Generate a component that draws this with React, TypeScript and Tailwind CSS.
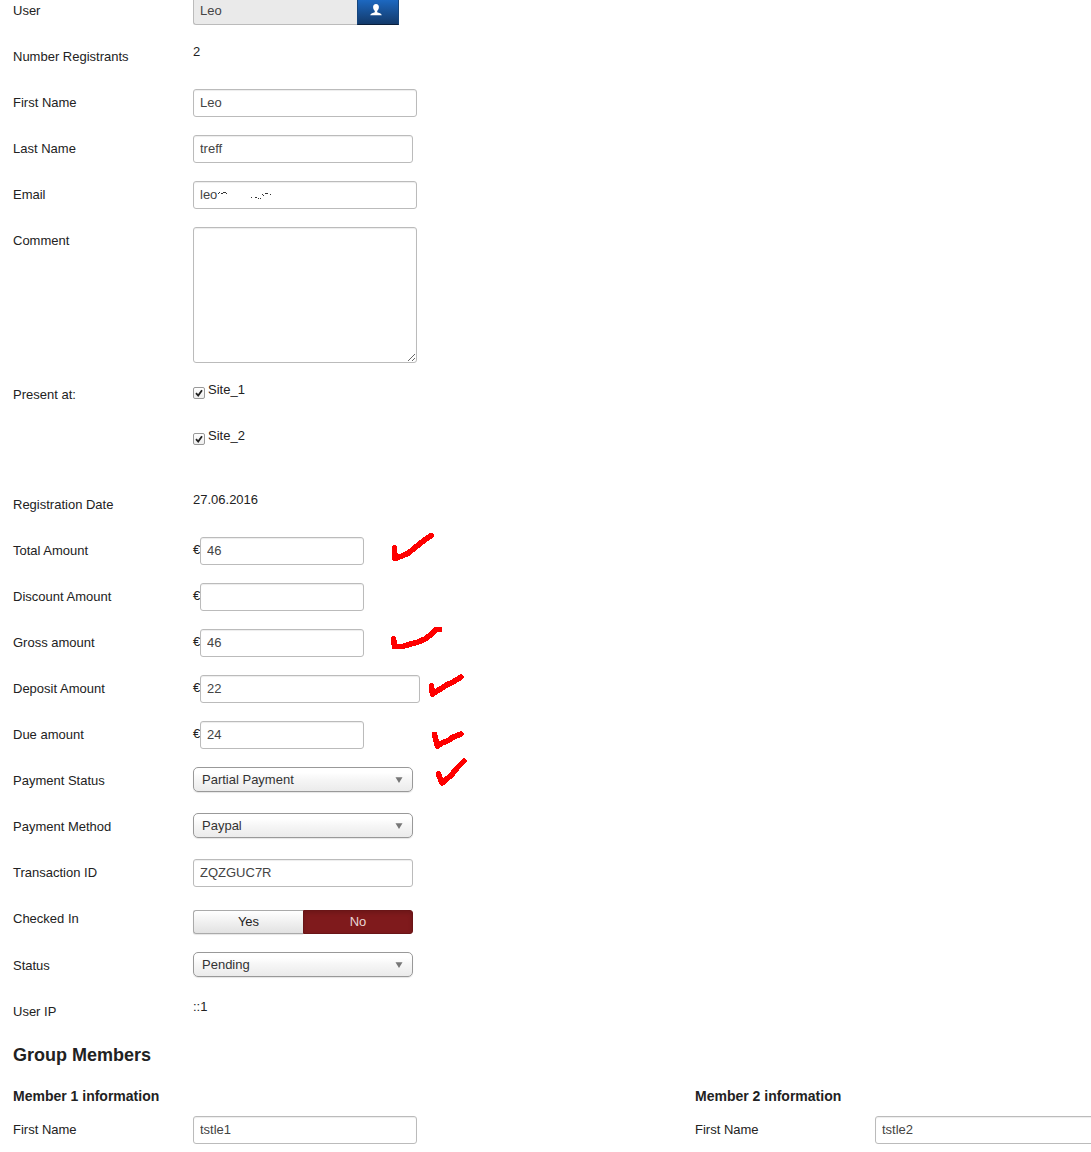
import React, { useState } from 'react';

const field = 'h-7 rounded-[3px] border border-[#bbb] bg-white px-1.5 pb-0.5 text-[13px] leading-[18px] text-[#444] shadow-[inset_0_1px_1px_rgba(0,0,0,0.075)] outline-none';

type RowProps = {
  label: string;
  htmlFor?: string;
  children: React.ReactNode;
};

function Row({ label, htmlFor, children }: RowProps) {
  return (
    <div className="flex min-h-7 items-start">
      {htmlFor ? (
        <label htmlFor={htmlFor} className="w-[180px] shrink-0 pt-[5px]">{label}</label>
      ) : (
        <span className="w-[180px] shrink-0 pt-[5px]">{label}</span>
      )}
      {children}
    </div>
  );
}

function Amount({ id, label, value, width = 'w-[164px]' }: { id: string; label: string; value: string; width?: string }) {
  return (
    <Row label={label} htmlFor={id}>
      <span className="w-[7px] pt-1">€</span>
      <input id={id} type="text" defaultValue={value} className={`${field} ${width}`} />
    </Row>
  );
}

function Dropdown({ id, label, options }: { id: string; label: string; options: string[] }) {
  return (
    <Row label={label} htmlFor={id}>
      <div className="relative w-[220px]">
        <select
          id={id}
          className="block h-[25px] w-full appearance-none rounded-[5px] border border-[#999] bg-linear-to-b from-white from-20% via-[#f6f6f6] via-50% to-[#ebebeb] pr-6 pl-2 text-[13px] text-[#333] shadow-[0_1px_1px_rgba(0,0,0,0.1)] outline-none"
        >
          {options.map((o) => (
            <option key={o}>{o}</option>
          ))}
        </select>
        <svg viewBox="0 0 8 6" className="pointer-events-none absolute top-[10px] right-[10px] h-[6px] w-[8px]" fill="#777">
          <path d="M0.5 0.3h7L4 6z" />
        </svg>
      </div>
    </Row>
  );
}

function Site({ id, label }: { id: string; label: string }) {
  return (
    <div className="flex min-h-7 items-start">
      <span className="relative mt-1.5 mr-[3px] block h-3 w-3">
        <input
          id={id}
          type="checkbox"
          defaultChecked
          className="peer block h-3 w-3 appearance-none rounded-[2px] border border-[#999] bg-linear-to-b from-white to-[#eee]"
        />
        <svg viewBox="0 0 12 12" className="pointer-events-none absolute inset-0 hidden peer-checked:block" fill="none" stroke="#222" strokeWidth="1.8">
          <path d="M3 6.2l2.2 2.4L9 3.2" />
        </svg>
      </span>
      <label htmlFor={id}>{label}</label>
    </div>
  );
}

function Member({ number }: { number: number }) {
  const id = `member-${number}`;
  return (
    <section className="w-[682px] shrink-0">
      <h4 className="mb-2.5 text-sm leading-5 font-bold">Member {number} information</h4>
      <Row label="First Name" htmlFor={id}>
        <input id={id} type="text" defaultValue={`tstle${number}`} className={`${field} w-[224px]`} />
      </Row>
    </section>
  );
}

// Red pen ticks next to the amounts
function Marks() {
  return (
    <svg
      viewBox="0 0 90 270"
      className="pointer-events-none absolute top-[525px] left-[385px] h-[270px] w-[90px]"
      fill="none"
      stroke="#fe0000"
      strokeWidth="5.6"
      strokeLinecap="round"
      strokeLinejoin="round"
      shapeRendering="crispEdges"
    >
      <path d="M9.5 23L10 33.5L17 31L23.5 28L32 21L41 14L46 10.5" />
      <path d="M8.5 114L9.5 121.5H17.5L24 119.5L32 117.5L40 114L45.5 110L50.5 104.5L54.5 104.5" />
      <path d="M46.5 161L47.5 169L61.5 160L68 157L76 152" />
      <path d="M49.5 209.5L52.5 221L58 217.5L63.5 215.5L67 212.5L76 209" />
      <path d="M53.5 249L57 258L66.5 250L72 243L79 236" />
    </svg>
  );
}

export default function App() {
  const [checkedIn, setCheckedIn] = useState('No');

  return (
    <div className="relative overflow-hidden bg-white pb-2 pl-[13px] font-['Liberation_Sans',Arial,sans-serif] text-[13px] leading-[18px] text-[#222]">
      <form className="-mt-[3px] flex flex-col gap-[18px]">
        <Row label="User" htmlFor="user">
          <input id="user" type="text" readOnly defaultValue="Leo" className="h-7 w-[164px] rounded-l-[3px] border border-r-0 border-[#bbb] bg-[#eaeaea] px-1.5 pb-0.5 text-[13px] text-[#444] outline-none" />
          <button type="button" aria-label="Select user" className="flex h-7 w-[42px] justify-center border border-t-[#1a62b5] border-r-[#16457c] border-b-[#0b1f3a] border-l-[#16457c] bg-linear-to-b from-[#1d6cc8] to-[#133a6b] pt-1.5 pr-1">
            <svg viewBox="0 0 12 12" className="h-3 w-3" fill="#fff">
              <path d="M6 0C4 0 3 1.4 3.1 3.3C3.2 5 4 6.2 4.8 6.9V8.2C3.2 8.8 0.6 9.2 0.2 11.2H11.8C11.4 9.2 8.8 8.8 7.2 8.2V6.9C8 6.2 8.8 5 8.9 3.3C9 1.4 8 0 6 0z" />
            </svg>
          </button>
        </Row>
        <Row label="Number Registrants">
          <span>2</span>
        </Row>
        <Row label="First Name" htmlFor="first-name">
          <input id="first-name" type="text" defaultValue="Leo" className={`${field} w-[224px]`} />
        </Row>
        <Row label="Last Name" htmlFor="last-name">
          <input id="last-name" type="text" defaultValue="treff" className={`${field} w-[220px]`} />
        </Row>
        <Row label="Email" htmlFor="email">
          <div className="relative">
            <input id="email" type="text" defaultValue="leo" className={`${field} block w-[224px]`} />
            {/* what is left of the erased address */}
            <svg viewBox="0 0 56 10" className="pointer-events-none absolute top-[9px] left-6 h-2.5 w-14" fill="#333">
              <path d="M1 3h1v1h-1zM2 2h1v1h-1zM4 3h2v1h-2zM6 2h3v1h-3zM9 3h1v1h-1zM34 7h1v1h-1zM38 7h2v1h-2zM41 8h1v1h-1zM43 8h1v1h-1zM45 4h1v1h-1zM46 5h1v1h-1zM48 3h3v1h-3zM53 4h1v1h-1z" />
            </svg>
          </div>
        </Row>
        <Row label="Comment" htmlFor="comment">
          <textarea id="comment" className={`${field} block h-[136px] w-[224px] resize py-1`} />
        </Row>
        <Row label="Present at:">
          <div className="mb-[18px] flex flex-col gap-[18px]">
            <Site id="site-1" label="Site_1" />
            <Site id="site-2" label="Site_2" />
          </div>
        </Row>
        <Row label="Registration Date">
          <span>27.06.2016</span>
        </Row>
        <Amount id="total" label="Total Amount" value="46" />
        <Amount id="discount" label="Discount Amount" value="" />
        <Amount id="gross" label="Gross amount" value="46" />
        <Amount id="deposit" label="Deposit Amount" value="22" width="w-[220px]" />
        <Amount id="due" label="Due amount" value="24" />
        <Dropdown id="payment-status" label="Payment Status" options={['Partial Payment', 'Full Payment']} />
        <Dropdown id="payment-method" label="Payment Method" options={['Paypal', 'Offline']} />
        <Row label="Transaction ID" htmlFor="transaction">
          <input id="transaction" type="text" defaultValue="ZQZGUC7R" className={`${field} w-[220px]`} />
        </Row>
        <Row label="Checked In">
          <div role="radiogroup" aria-label="Checked In" className="mt-[5px] flex w-[220px] text-center leading-[22px]">
            <label className="w-1/2 rounded-l-[3px] border border-r-0 border-[#aaa] bg-linear-to-b from-white to-[#e2e2e2] shadow-[0_1px_1px_rgba(0,0,0,0.1)] has-checked:border-[#46a546] has-checked:bg-[#378137] has-checked:bg-none has-checked:text-white">
              <input type="radio" name="checked-in" className="sr-only" checked={checkedIn === 'Yes'} onChange={() => setCheckedIn('Yes')} />
              Yes
            </label>
            <label className="w-1/2 rounded-r-[3px] border border-[#aaa] bg-linear-to-b from-white to-[#e2e2e2] has-checked:border-[#6a1517] has-checked:bg-[#7f1a1c] has-checked:bg-none has-checked:text-[#e8d5d5] has-checked:shadow-[inset_0_2px_4px_rgba(0,0,0,0.15)]">
              <input type="radio" name="checked-in" className="sr-only" checked={checkedIn === 'No'} onChange={() => setCheckedIn('No')} />
              No
            </label>
          </div>
        </Row>
        <Dropdown id="status" label="Status" options={['Pending', 'Paid', 'Cancelled']} />
        <Row label="User IP">
          <span>::1</span>
        </Row>

        <div>
          <h3 className="mb-5 text-lg leading-[22px] font-bold">Group Members</h3>
          <div className="flex">
            <Member number={1} />
            <Member number={2} />
          </div>
        </div>
      </form>
      <Marks />
    </div>
  );
}
